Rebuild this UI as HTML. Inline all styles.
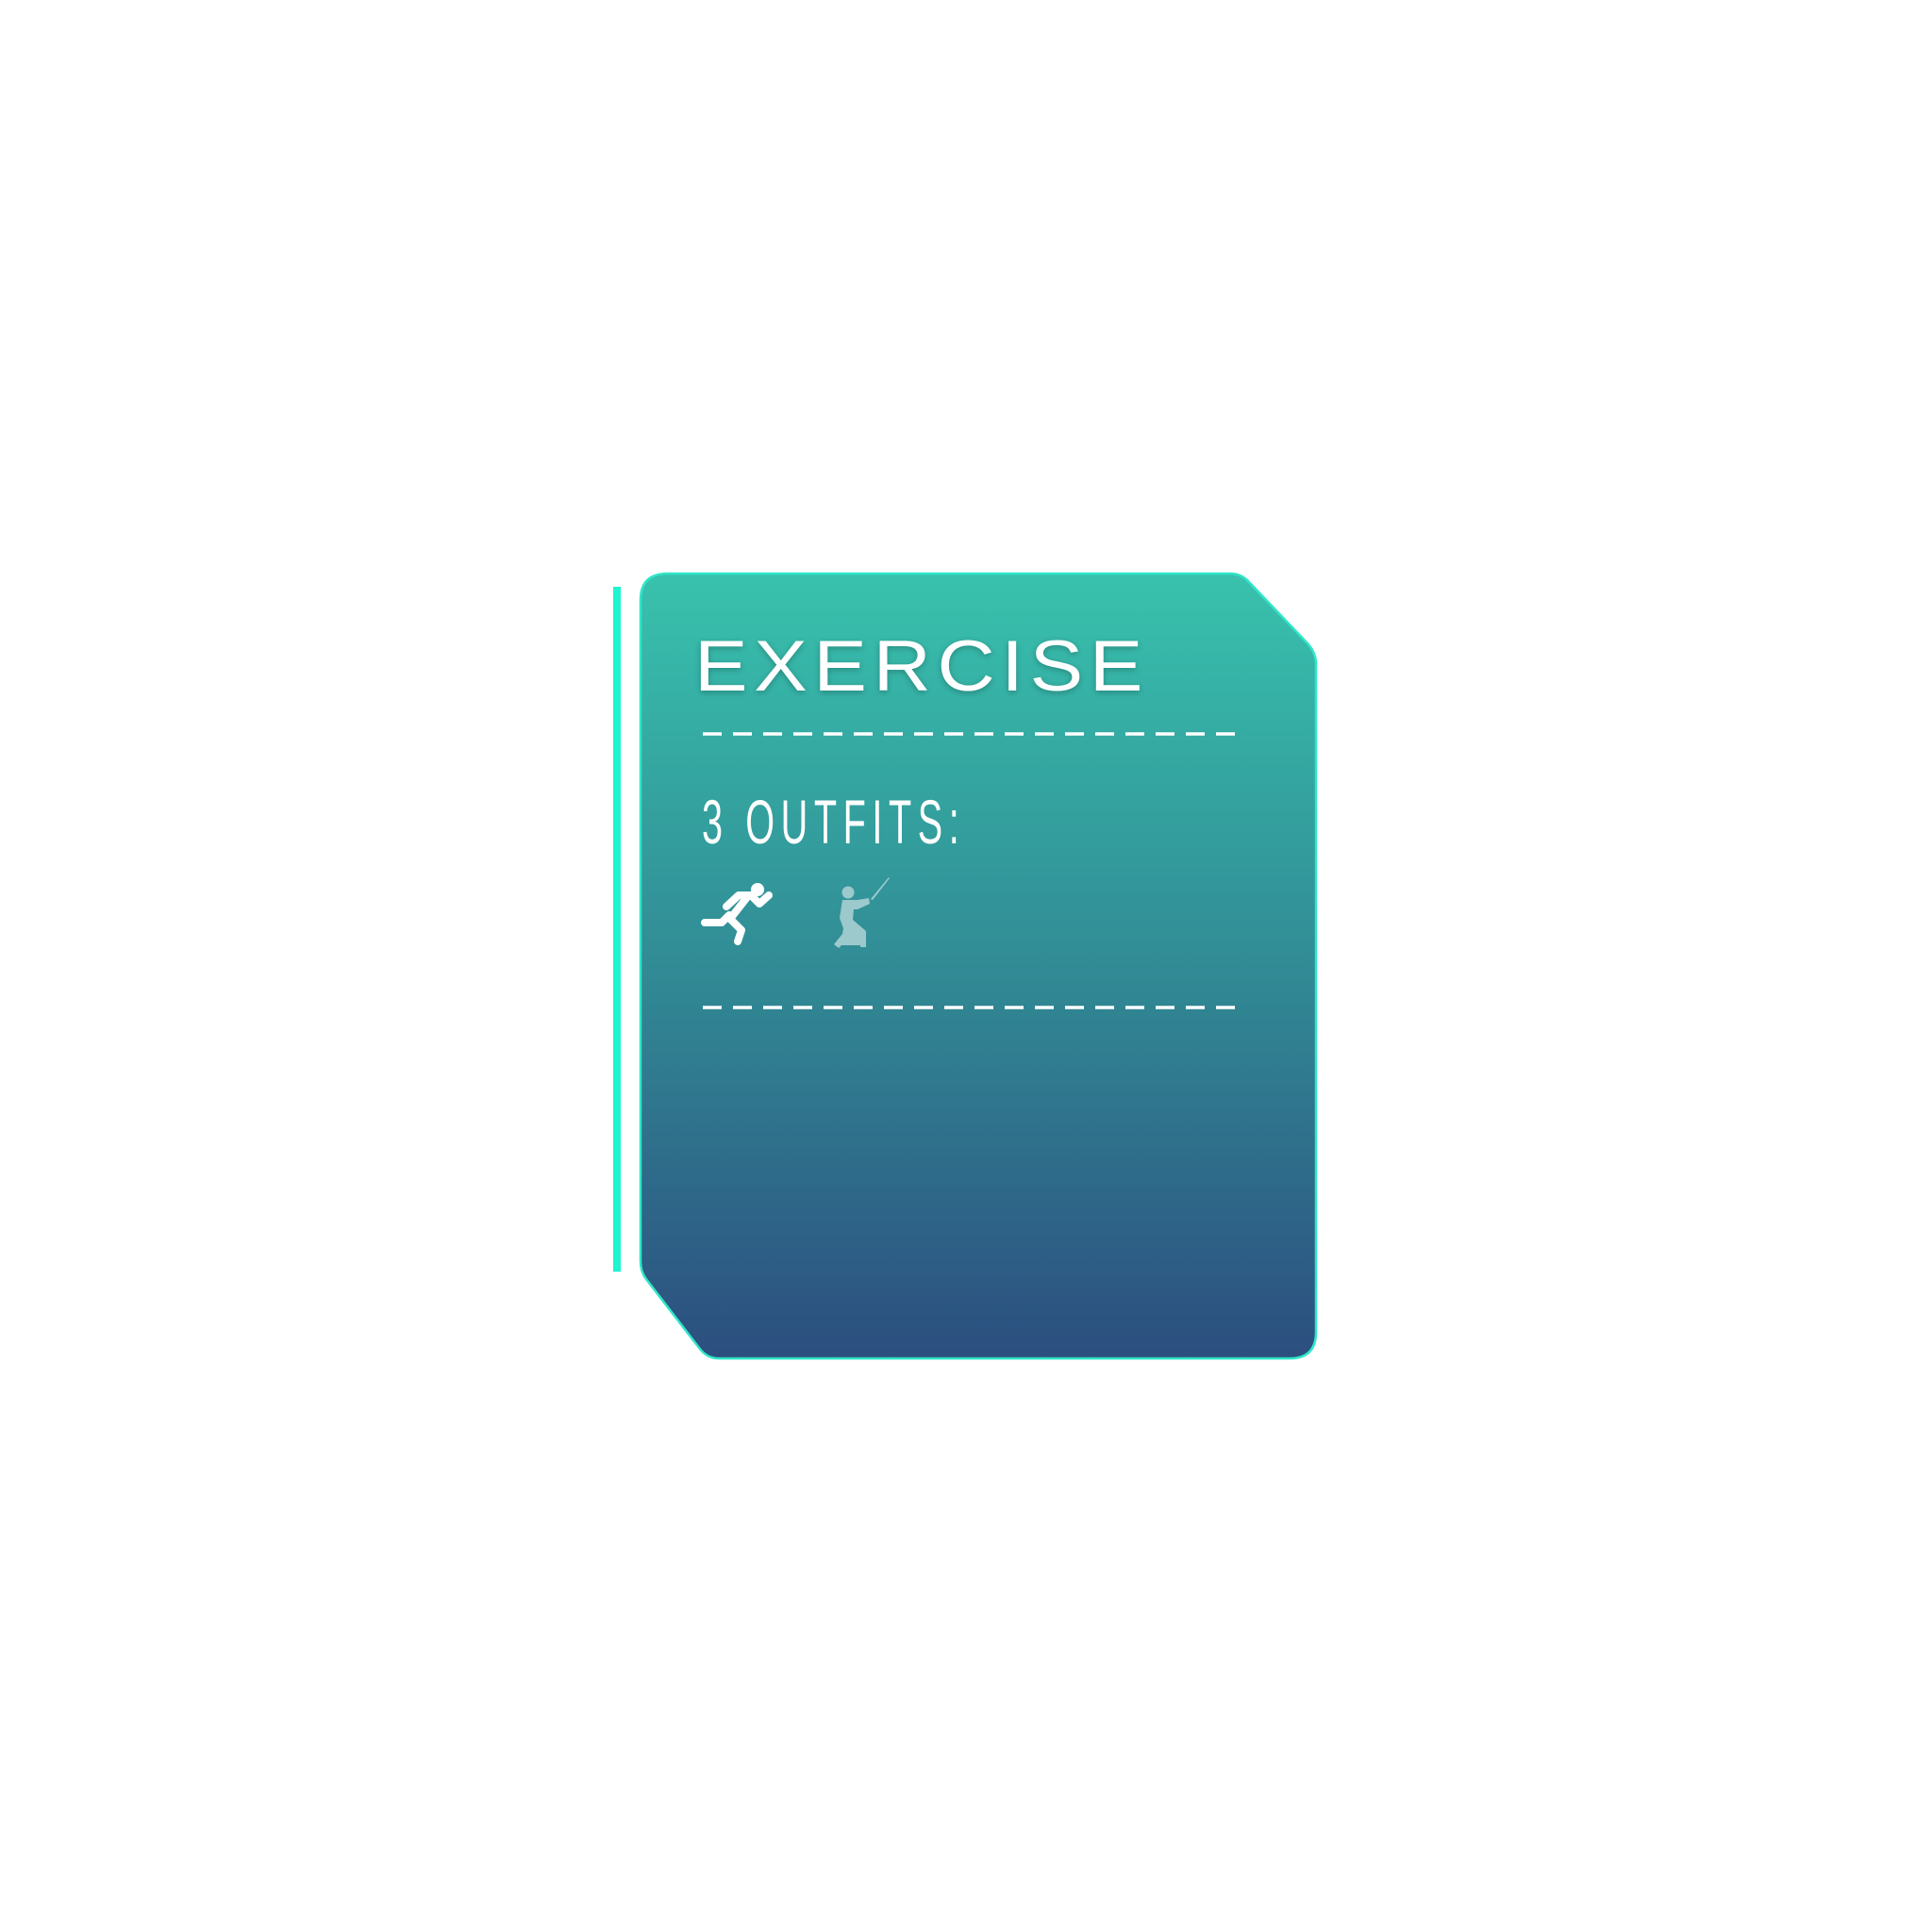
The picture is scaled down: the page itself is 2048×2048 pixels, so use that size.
<!DOCTYPE html>
<html><head><style>
body{margin:0;width:2048px;height:2048px;background:#fff;position:relative;overflow:hidden}
.bar{position:absolute;left:650px;top:622px;width:8px;height:726px;background:#1ff5cf}
svg{position:absolute;left:0;top:0}
.t1{position:absolute;left:736px;top:663px;font:400 76px "Liberation Sans",sans-serif;color:#fff;letter-spacing:6px;transform:scaleX(1.115);transform-origin:left;white-space:nowrap;text-shadow:0 2px 6px rgba(0,0,0,.25);line-height:normal}
.t2{position:absolute;left:744px;top:833px;font:400 66px "Liberation Sans Narrow","Liberation Sans",sans-serif;color:#fff;letter-spacing:11px;transform:scaleX(.6);transform-origin:left;white-space:nowrap;line-height:normal}
</style></head><body>
<div class="bar"></div>
<svg width="2048" height="2048">
<defs><linearGradient id="g" x1="0" y1="0" x2="0" y2="1"><stop offset="0" stop-color="#38c2ad"/><stop offset=".5" stop-color="#318b95"/><stop offset="1" stop-color="#2c4e7f"/></linearGradient></defs>
<path d="M708 608 H1304 Q1316 608 1324 617 L1386 682 Q1395 692 1395 704 V1412 Q1395 1440 1367 1440 H762 Q750 1440 742 1430 L685 1356 Q679 1348 679 1337 V636 Q679 608 708 608 Z" fill="url(#g)" stroke="#2fe6c8" stroke-width="2.5"/>
<line x1="745" y1="778" x2="1314" y2="778" stroke="#fff" stroke-width="3.5" stroke-dasharray="20 12"/>
<line x1="745" y1="1068" x2="1314" y2="1068" stroke="#fff" stroke-width="3.5" stroke-dasharray="20 12"/>
<g fill="none" stroke="#fff" stroke-width="8" stroke-linecap="round" stroke-linejoin="round">
<path d="M747 978 H765 L773 970"/><path d="M770 961 L783 949 H796 L805 958 L815 949"/><path d="M792 951 L774 974 L786 986 L782 998"/>
</g>
<circle cx="803" cy="943" r="7" fill="#fff"/>
<g fill="#9cc9cc">
<circle cx="899" cy="946" r="6.5"/>
<path d="M893 954 L909 954 L921 952 L922 958 L909 964 L905 964 L904 975 L918 987 L918 1004 L912 1004 L912 1002 L892 1002 L889 1005 L884 1001 L893 990 L894 984 L890 973 Z"/>
<path d="M923 953 L942 930 L943 931 L925 954 Z"/>
</g>
</svg>
<div class="t1">EXERCISE</div>
<div class="t2">3 OUTFITS:</div>
</body></html>
